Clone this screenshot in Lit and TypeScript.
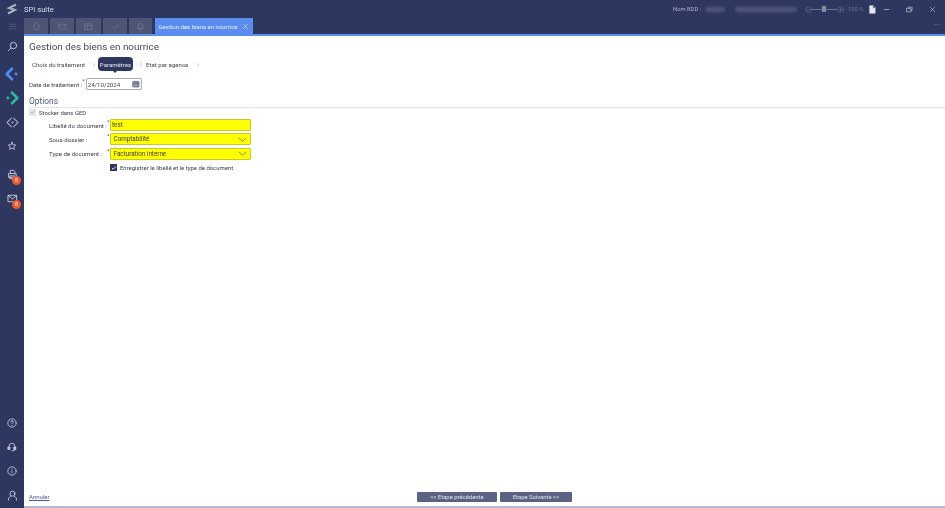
import { LitElement, html, css, svg } from "lit";
import { customElement } from "lit/decorators.js";

const ic = (body: unknown, size = 12, cls = "") => html`<svg class=${cls} width=${size} height=${size} viewBox="0 0 24 24" fill="none" stroke="currentColor" stroke-width="2" stroke-linecap="round" stroke-linejoin="round">${body}</svg>`;

const chevron = html`<svg width="6" height="6" viewBox="0 0 24 24" fill="none" stroke="currentColor" stroke-width="2"><path d="M9 5l7 7-7 7" stroke-width="1.6"/></svg>`;

@customElement("app-root")
export class AppRoot extends LitElement {
  static styles = css`
    :host { display: block; width: 945px; height: 508px; overflow: hidden; font-family: "Roboto", "Noto Sans", sans-serif; color: #3c4150; }
    * { box-sizing: border-box; }
    .app { width: 945px; height: 508px; background: #2e3760; display: flex; flex-direction: column; filter: blur(0.4px); }
    .titlebar { height: 18px; flex: none; display: flex; align-items: center; color: #d5d8e5; }
    .logo { width: 24px; display: flex; justify-content: center; color: #a9aec4; }
    .appname { font-size: 7.6px; color: #d9dce8; }
    .spacer { flex: 1; }
    .bdd { font-size: 5.8px; color: #aeb3c8; width: 32px; white-space: nowrap; }
    .redact { height: 5px; border-radius: 2px; background: #4d5680; filter: blur(1.5px); }
    .r1 { width: 20px; margin-right: 10px; }
    .r2 { width: 62px; margin-right: 8px; }
    .zoom { display: flex; align-items: center; color: #6d7391; margin-right: 4px; }
    .zoom .line { width: 10px; height: 1px; background: #6d7391; }
    .zoom .line.b { width: 11px; }
    .zoom .knob { width: 4px; height: 6px; background: #858aa5; }
    .zoom span { font-size: 5.8px; margin-left: 4px; width: 16px; white-space: nowrap; color: #6d7391; }
    .doc { color: #e6e8f0; margin-right: 6px; display: flex; }
    .winbtns { display: flex; align-items: center; gap: 16px; margin-right: 9px; color: #d5d8e5; }
    .winbtns svg { display: block; }
    .tabsrow { height: 16px; flex: none; display: flex; padding-left: 24px; position: relative; }
    .tab { width: 24px; height: 16px; background: #4d5474; color: #6f7693; display: flex; align-items: center; justify-content: center; margin-right: 2px; }
    .tab.wide { width: 25px; }
    .tab.narrow { width: 23px; }
    .tab.active { width: 98px; margin-left: 1px; background: #5b8def; color: #e8eefb; font-size: 6px; gap: 5px; }
    .more { position: absolute; right: 4px; top: 1px; font-size: 8px; line-height: 8px; color: #8a90aa; letter-spacing: 0.2px; }
    .body { flex: 1; display: flex; min-height: 0; }
    .side { width: 24px; flex: none; display: flex; flex-direction: column; align-items: center; margin-top: -14px; color: #c9cddd; }
    .si { height: 24px; width: 24px; display: flex; align-items: center; justify-content: center; position: relative; flex: none; }
    .si.ham { height: 12px; color: #5a6185; }
    .si.search { height: 28px; margin-bottom: 2px; }
    .si.print { margin-top: 4px; }
    .si.help { margin-top: auto; }
    .si.user { margin-bottom: 1px; }
    .badge { position: absolute; left: 12px; top: 14px; width: 9px; height: 9px; border-radius: 50%; background: #f0562c; color: #fff; font-size: 5px; line-height: 9px; text-align: center; }
    .main { flex: 1; background: #fff; border-top: 2px solid #5b8def; border-bottom: 2px solid #b5b9d2; display: flex; flex-direction: column; padding: 0 0 4px 5px; min-width: 0; }
    h1 { margin: 3px 0 0; font-size: 9.9px; line-height: 16px; font-weight: 400; color: #444a5e; }
    .steps { display: flex; align-items: center; height: 14px; margin-top: 2px; font-size: 6.1px; color: #444855; position: relative; white-space: nowrap; }
    .step { display: flex; align-items: center; }
    .step svg { color: #8d90a0; flex: none; }
    .s1 { margin-left: 3px; width: 66px; flex: none; gap: 6px; padding-top: 1px; }
    .s2 { width: 48px; flex: none; gap: 5px; }
    .s3 { gap: 7px; padding-top: 1px; }
    .chip { position: relative; background: #2e3760; color: #e4e6f0; width: 35px; height: 14px; border-radius: 4px; display: flex; align-items: center; justify-content: center; flex: none; }
    .chip::after { content: ""; position: absolute; left: 14px; top: 13px; border: 3.5px solid transparent; border-top-color: #2e3760; border-bottom: 0; }
    .daterow { display: flex; align-items: center; height: 12px; margin-top: 7px; font-size: 6.1px; }
    .lab { color: #3c4150; white-space: nowrap; }
    .req { font-size: 6px; align-self: flex-start; line-height: 6px; color: #555; }
    .date { width: 56px; height: 12px; margin-left: 1px; border: 1px solid #a9acb8; border-radius: 2px; display: flex; align-items: center; justify-content: space-between; padding: 0 1px; color: #444; }
    .date svg { color: #596080; }
    h2 { margin: 6px 0 0; font-size: 8.4px; line-height: 11px; font-weight: 400; color: #515a7c; border-bottom: 1px solid #e3e4ea; height: 12px; }
    .ged { display: flex; align-items: center; gap: 3px; margin-top: 0; font-size: 5.95px; height: 8px; }
    .cb { width: 7px; height: 7px; flex: none; display: flex; align-items: center; justify-content: center; }
    .cb.off { background: #e4e6ee; color: #9da3bb; }
    .cb.on { background: #2e3760; color: #fff; }
    .form { display: grid; grid-template-columns: 58px 3px 141px; grid-auto-rows: 12px; row-gap: 2.4px; margin: 3px 0 0 20px; font-size: 6.1px; align-items: center; }
    .form .req { align-self: start; }
    .fld { height: 12px; background: #ffff00; border: 1px solid #c9c92e; border-radius: 1px; color: #3a3a20; display: flex; align-items: center; justify-content: space-between; padding: 0 3px 0 1px; font-size: 6.3px; }
    .fld svg { color: #5a5f30; }
    .save { display: flex; align-items: center; gap: 3px; margin: 4.5px 0 0 81px; font-size: 5.95px; height: 7px; }
    .foot { margin-top: auto; display: flex; align-items: center; height: 10px; position: relative; font-size: 6px; }
    .cancel { color: #4a5a94; text-decoration: underline; width: 20px; white-space: nowrap; position: relative; top: -1px; }
    .btns { display: flex; gap: 3px; margin-left: 368px; }
    .btn { height: 10px; background: #5c6284; border-radius: 1px; color: #dfe1ea; display: flex; align-items: center; justify-content: center; font-size: 5.9px; }
    .b1 { width: 80px; } .b2 { width: 72px; }
  `;

  render() {
    const cbCheck = svg`<path d="M5 13l4 4 10-10" stroke-width="3.4"/>`;
    return html`<div class="app">
      <div class="titlebar">
        <div class="logo"><svg width="12" height="12" viewBox="0 0 24 24" fill="none" stroke="currentColor" stroke-width="4"><path d="M20 3L6 10l12 4L4 21"/></svg></div>
        <span class="appname">SPI suite</span>
        <div class="spacer"></div>
        <span class="bdd">Nom BDD :</span>
        <div class="redact r1"></div><div class="redact r2"></div>
        <div class="zoom">
          ${ic(svg`<circle cx="12" cy="12" r="10"/><path d="M7 12h10"/>`, 7)}
          <div class="line"></div><div class="knob"></div><div class="line b"></div>
          ${ic(svg`<circle cx="12" cy="12" r="10"/><path d="M7 12h10M12 7v10"/>`, 7)}
          <span>100 %</span>
        </div>
        <div class="doc">${ic(svg`<path d="M5 2h9l5 5v15H5zM14 2v5h5" fill="#e6e8f0" stroke-width="1.5"/><path d="M14 2v5h5" stroke="#2e3760" stroke-width="1.5"/>`, 9)}</div>
        <div class="winbtns">
          ${ic(svg`<path d="M4 12h16"/>`, 7)}
          ${ic(svg`<rect x="3" y="8" width="14" height="12"/><path d="M8 8V4h13v11h-4"/>`, 7)}
          ${ic(svg`<path d="M5 5l14 14M19 5L5 19"/>`, 7)}
        </div>
      </div>
      <div class="tabsrow">
        <div class="tab">${ic(svg`<path d="M3 11l9-8 9 8M6 9v11h12V9"/>`, 9)}</div>
        <div class="tab">${ic(svg`<rect x="3" y="6" width="18" height="13"/><path d="M3 7l9 6 9-6"/>`, 9)}</div>
        <div class="tab wide">${ic(svg`<rect x="3" y="5" width="18" height="15"/><path d="M3 10h18M9 10v10"/>`, 9)}</div>
        <div class="tab">${ic(svg`<path d="M4 13l5 5L20 7"/>`, 9)}</div>
        <div class="tab narrow">${ic(svg`<path d="M6 17V10a6 6 0 0112 0v7zM4 17h16M10 21h4"/>`, 9)}</div>
        <div class="tab active"><span>Gestion des biens en nourrice</span>${ic(svg`<path d="M5 5l14 14M19 5L5 19"/>`, 7)}</div>
        <div class="more">...</div>
      </div>
      <div class="body">
        <nav class="side">
          <div class="si ham">${ic(svg`<path d="M3 6h18M3 12h18M3 18h18"/>`, 9)}</div>
          <div class="si search">${ic(svg`<circle cx="14" cy="10" r="7"/><path d="M9 15l-6 6"/>`, 11)}</div>
          <div class="si" style="color:#4f8df0">${ic(svg`<path d="M12 3l-9 9 9 9" stroke-width="4.5"/><path d="M19 9.5l2.5 2.5-2.5 2.5-2.5-2.5z" fill="currentColor" stroke-width="1"/>`, 14)}</div>
          <div class="si" style="color:#2fb8a0">${ic(svg`<path d="M12 3l9 9-9 9" stroke-width="4.5"/><path d="M5 9.5L7.5 12 5 14.5 2.5 12z" fill="currentColor" stroke-width="1"/>`, 14)}</div>
          <div class="si" style="color:#a3a8c0">${ic(svg`<path d="M10 4l-8 8 8 8M14 4l8 8-8 8"/><circle cx="12" cy="12" r="2" fill="currentColor" stroke="none"/>`, 13)}</div>
          <div class="si">${ic(svg`<path d="M12 3l2.7 6 6.3.6-4.8 4.2 1.5 6.4L12 17l-5.7 3.2 1.5-6.4L3 9.6 9.3 9z"/>`, 10)}</div>
          <div class="si print">${ic(svg`<path d="M7 10V3h8l2 2v5M4 10h16v8H4zM7 15h10v6H7z"/>`, 11)}<span class="badge">8</span></div>
          <div class="si">${ic(svg`<rect x="3" y="5" width="18" height="14"/><path d="M3 6l9 7 9-7"/>`, 11)}<span class="badge">8</span></div>
          <div class="si help">${ic(svg`<circle cx="12" cy="12" r="10"/><path d="M9 9.5a3 3 0 116 0c0 2-3 2.2-3 4.5M12 17.5v.5"/>`, 10)}</div>
          <div class="si">${ic(svg`<path d="M5 14V10a7 7 0 0114 0v4M12 21h5l2-3"/><rect x="3" y="12" width="4" height="6" fill="currentColor"/><rect x="17" y="12" width="4" height="6" fill="currentColor"/>`, 10)}</div>
          <div class="si">${ic(svg`<circle cx="12" cy="12" r="10"/><path d="M12 7v.5M12 11v6"/>`, 10)}</div>
          <div class="si user">${ic(svg`<circle cx="12" cy="8" r="5.5"/><path d="M3 22c0-5 3-8 5-8.5M21 22c0-5-3-8-5-8.5"/>`, 11)}</div>
        </nav>
        <main class="main">
          <h1>Gestion des biens en nourrice</h1>
          <div class="steps">
            <div class="step s1"><span>Choix du traitement</span>${chevron}</div>
            <div class="step s2"><div class="chip">Paramètres</div>${chevron}</div>
            <div class="step s3"><span>Etat par agence</span>${chevron}</div>
          </div>
          <div class="daterow">
            <span class="lab">Date de traitement :</span><span class="req">*</span>
            <div class="date"><span>24/10/2024</span>${ic(svg`<rect x="3" y="5" width="18" height="16" fill="#8f95b0"/><path d="M3 10h18M8 3v4M16 3v4"/>`, 8)}</div>
          </div>
          <h2>Options</h2>
          <div class="ged"><div class="cb off">${ic(cbCheck, 6)}</div><span class="lab">Stocker dans GED</span></div>
          <div class="form">
            <span class="lab">Libellé du document :</span><span class="req">*</span><div class="fld"><span>test</span></div>
            <span class="lab">Sous-dossier :</span><span class="req">*</span><div class="fld"><span>&nbsp;Comptabilité</span>${ic(svg`<path d="M3 8l9 9 9-9"/>`, 9)}</div>
            <span class="lab">Type de document :</span><span class="req">*</span><div class="fld"><span>&nbsp;Facturation interne</span>${ic(svg`<path d="M3 8l9 9 9-9"/>`, 9)}</div>
          </div>
          <div class="save"><div class="cb on">${ic(cbCheck, 6)}</div><span class="lab">Enregistrer le libellé et le type de document</span></div>
          <div class="foot">
            <span class="cancel">Annuler</span>
            <div class="btns"><div class="btn b1">&lt;&lt; Etape précédente</div><div class="btn b2">Etape Suivante &gt;&gt;</div></div>
          </div>
        </main>
      </div>
    </div>`;
  }
}
